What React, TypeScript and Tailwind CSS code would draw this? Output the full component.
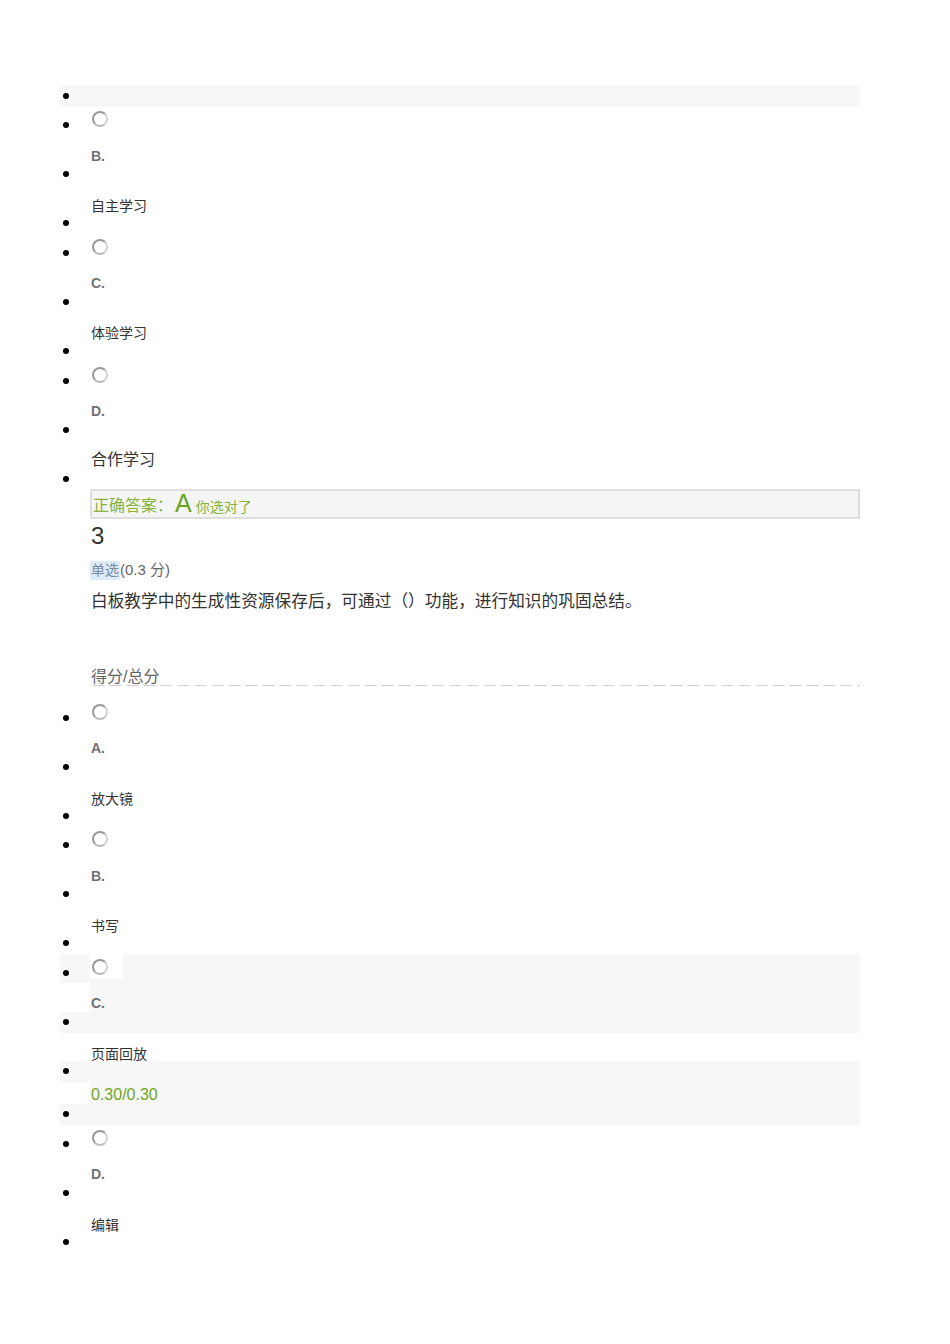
import type { ReactNode } from "react";

type RowProps = {
  h: string;
  pt: string;
  bullet?: boolean;
  bg?: "full" | "content";
  children?: ReactNode;
};

// one printed line: bullet column + content column
function Row({ h, pt, bullet, bg, children }: RowProps) {
  return (
    <div className={`flex ${h} ${bg === "full" ? "bg-[#f7f7f7]" : ""}`}>
      <div className={`w-[30px] shrink-0 ${pt}`}>
        <div className="flex h-4 items-center pl-[3px]">
          {bullet && <span className="block h-[6px] w-[6px] rounded-full bg-black" />}
        </div>
      </div>
      <div className={`flex-1 ${pt} ${bg === "content" ? "bg-[#f7f7f7]" : ""}`}>
        <div className="flex h-4 items-center">{children}</div>
      </div>
    </div>
  );
}

function Radio({ boxed }: { boxed?: boolean }) {
  return (
    <div
      className={`mb-[13px] flex h-[25px] w-[33px] shrink-0 items-center pl-[2px] ${
        boxed ? "bg-white" : ""
      }`}
    >
      <span className="block h-[16px] w-[16px] rounded-full border-[2.5px] border-[#9a9a9a] border-r-[#d2d2d2] border-b-[#bdbdbd] bg-white" />
    </div>
  );
}

const Letter = ({ c }: { c: string }) => (
  <span className="pl-px text-[14px] font-bold text-[#707070]">{c}</span>
);

const Opt = ({ t, big }: { t: string; big?: boolean }) => (
  <span className={`pl-px whitespace-nowrap text-[#333] ${big ? "text-[16px]" : "text-[14px]"}`}>
    {t}
  </span>
);

// full-width punctuation kept at a full em
const P = ({ c }: { c: string }) => <span className="inline-block w-[1em]">{c}</span>;

export default function App() {
  return (
    <div className="min-h-[1344px] w-[950px] bg-white pt-[86px] pl-[60px] font-['Liberation_Sans','Noto_Sans_CJK_SC',sans-serif]">
      <div className="w-[800px]">
        {/* question 2, tail */}
        <Row h="h-[20px]" pt="pt-[2px]" bullet bg="full" />
        <Row h="h-[34px]" pt="pt-[11px]" bullet>
          <Radio />
        </Row>
        <Row h="h-[26px]" pt="pt-[8px]">
          <Letter c="B." />
        </Row>
        <Row h="h-[24px]" pt="pt-0" bullet />
        <Row h="h-[25px]" pt="pt-[8px]">
          <Opt t="自主学习" />
        </Row>
        <Row h="h-[18px]" pt="pt-0" bullet />
        <Row h="h-[35px]" pt="pt-[12px]" bullet>
          <Radio />
        </Row>
        <Row h="h-[26px]" pt="pt-[7px]">
          <Letter c="C." />
        </Row>
        <Row h="h-[24px]" pt="pt-0" bullet />
        <Row h="h-[25px]" pt="pt-[7px]">
          <Opt t="体验学习" />
        </Row>
        <Row h="h-[18px]" pt="pt-0" bullet />
        <Row h="h-[35px]" pt="pt-[12px]" bullet>
          <Radio />
        </Row>
        <Row h="h-[26px]" pt="pt-[7px]">
          <Letter c="D." />
        </Row>
        <Row h="h-[22px]" pt="pt-0" bullet />
        <Row h="h-[27px]" pt="pt-[8px]">
          <Opt t="合作学习" big />
        </Row>
        <Row h="h-[18px]" pt="pt-0" bullet />

        {/* answer box */}
        <div className="ml-[30px] flex h-[30px] items-end border-2 border-[#dedede] bg-[#f5f5f5] pb-[1px] pl-px">
          <span className="text-[16px] leading-[20px] text-[#86b33a]">
            正确答案<P c="：" />
          </span>
          <span className="mr-[4px] ml-[2px] text-[25px] leading-[26px] text-[#6aa51c]">A</span>
          <span className="text-[14px] leading-[18px] text-[#86b33a]">你选对了</span>
        </div>

        {/* question 3 */}
        <div className="ml-[30px] flex h-[34px] items-center pl-px text-[24px] text-[#333]">3</div>
        <div className="ml-[30px] flex h-[34px] items-center text-[15px] text-[#666]">
          <span className="inline-block h-[19px] bg-[#dcebf8] px-px text-[14px] leading-[19px] text-[#7a8a99]">
            单选
          </span>
          <span>(0.3 分)</span>
        </div>
        <div className="ml-[30px] flex h-[30px] items-center whitespace-nowrap pl-px text-[16.7px] text-[#333]">
          <span>
            白板教学中的生成性资源保存后<P c="，" />可通过<P c="（" />
            <P c="）" />功能<P c="，" />进行知识的巩固总结<P c="。" />
          </span>
        </div>
        <div className="h-[47px]" />
        <div className="ml-[30px] h-[22px] bg-[linear-gradient(to_right,#d0d0d0_12px,transparent_12px)] bg-[length:17px_1px] bg-bottom bg-repeat-x pt-[3px] pl-px text-[16px] leading-[20px] text-[#666]">
          得分/总分
        </div>

        <Row h="h-[47px]" pt="pt-[24px]" bullet>
          <Radio />
        </Row>
        <Row h="h-[25px]" pt="pt-[7px]">
          <Letter c="A." />
        </Row>
        <Row h="h-[26px]" pt="pt-[1px]" bullet />
        <Row h="h-[24px]" pt="pt-[7px]">
          <Opt t="放大镜" />
        </Row>
        <Row h="h-[18px]" pt="pt-0" bullet />
        <Row h="h-[35px]" pt="pt-[11px]" bullet>
          <Radio />
        </Row>
        <Row h="h-[25px]" pt="pt-[7px]">
          <Letter c="B." />
        </Row>
        <Row h="h-[24px]" pt="pt-0" bullet />
        <Row h="h-[24px]" pt="pt-[8px]">
          <Opt t="书写" />
        </Row>
        <Row h="h-[20px]" pt="pt-[1px]" bullet />

        <Row h="h-[29px]" pt="pt-[11px]" bullet bg="full">
          <Radio boxed />
        </Row>
        <Row h="h-[29px]" pt="pt-[12px]" bg="content">
          <Letter c="C." />
        </Row>
        <Row h="h-[21px]" pt="pt-[2px]" bullet bg="full" />
        <Row h="h-[28px]" pt="pt-[13px]">
          <Opt t="页面回放" />
        </Row>
        <Row h="h-[21px]" pt="pt-[2px]" bullet bg="full" />
        <Row h="h-[22px]" pt="pt-[5px]" bg="content">
          <span className="pl-px text-[16px] text-[#6fa523]">0.30/0.30</span>
        </Row>
        <Row h="h-[21px]" pt="pt-[2px]" bullet bg="full" />

        <Row h="h-[35px]" pt="pt-[11px]" bullet>
          <Radio />
        </Row>
        <Row h="h-[25px]" pt="pt-[6px]">
          <Letter c="D." />
        </Row>
        <Row h="h-[23px]" pt="pt-0" bullet />
        <Row h="h-[26px]" pt="pt-[9px]">
          <Opt t="编辑" />
        </Row>
        <Row h="h-[26px]" pt="pt-0" bullet />
      </div>
    </div>
  );
}
